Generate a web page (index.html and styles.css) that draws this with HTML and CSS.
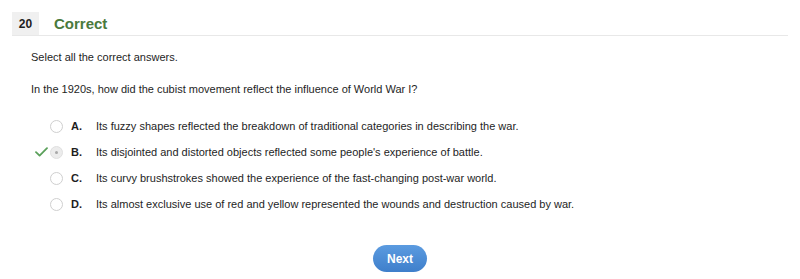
FILE: index.html
```html
<!DOCTYPE html>
<html>
<head>
<meta charset="utf-8">
<link rel="stylesheet" href="styles.css">
</head>
<body>
<div class="page">
  <div class="header">
    <div class="num">20</div>
    <div class="status">Correct</div>
  </div>
  <p class="instr">Select all the correct answers.</p>
  <p class="question">In the 1920s, how did the cubist movement reflect the influence of World War I?</p>
  <ul class="options">
    <li class="opt">
      <span class="mark"></span>
      <span class="radio"></span>
      <span class="letter">A.</span>
      <span class="text">Its fuzzy shapes reflected the breakdown of traditional categories in describing the war.</span>
    </li>
    <li class="opt">
      <span class="mark"><svg width="13" height="10" viewBox="0 0 13 10"><path d="M1 5.2 L4.6 8.6 L12 1.2" fill="none" stroke="#5aa05a" stroke-width="1.8" stroke-linecap="round" stroke-linejoin="round"/></svg></span>
      <span class="radio selected"></span>
      <span class="letter">B.</span>
      <span class="text">Its disjointed and distorted objects reflected some people's experience of battle.</span>
    </li>
    <li class="opt">
      <span class="mark"></span>
      <span class="radio"></span>
      <span class="letter">C.</span>
      <span class="text">Its curvy brushstrokes showed the experience of the fast-changing post-war world.</span>
    </li>
    <li class="opt">
      <span class="mark"></span>
      <span class="radio"></span>
      <span class="letter">D.</span>
      <span class="text">Its almost exclusive use of red and yellow represented the wounds and destruction caused by war.</span>
    </li>
  </ul>
  <div class="actions">
    <button class="next">Next</button>
  </div>
</div>
</body>
</html>
```

FILE: styles.css
```css
html, body {
  margin: 0;
  padding: 0;
  background: #ffffff;
}
body {
  font-family: "Liberation Sans", Arial, sans-serif;
  color: #1e1e1e;
}
.page {
  padding: 12px 12px 0 12px;
}
.header {
  display: flex;
  align-items: center;
  height: 23px;
  border-bottom: 1px solid #e8e8e8;
}
.num {
  width: 27px;
  height: 23px;
  background: #f0f0f0;
  display: flex;
  align-items: center;
  justify-content: center;
  font-weight: bold;
  font-size: 12px;
  color: #1e1e1e;
}
.status {
  margin-left: 15px;
  font-weight: bold;
  font-size: 15px;
  color: #4a7a3c;
}
.instr {
  margin: 13px 0 0 19px;
  font-size: 11px;
  line-height: 16px;
}
.question {
  margin: 16px 0 0 19px;
  font-size: 11px;
  line-height: 16px;
}
.options {
  list-style: none;
  margin: 16px 0 0 0;
  padding: 0;
}
.opt {
  display: flex;
  align-items: center;
  height: 26px;
  font-size: 11px;
}
.mark {
  width: 38px;
  display: flex;
  justify-content: flex-end;
  padding-right: 2px;
  box-sizing: border-box;
}
.radio {
  width: 13px;
  height: 13px;
  border: 1px solid #cfcfcf;
  border-radius: 50%;
  box-sizing: border-box;
  background: #fff;
  position: relative;
}
.radio.selected {
  background: #ececec;
  border-color: #e0e0e0;
}
.radio.selected::after {
  content: "";
  position: absolute;
  left: 4px;
  top: 4px;
  width: 3px;
  height: 3px;
  border-radius: 50%;
  background: #a8a8a8;
}
.letter {
  margin-left: 8px;
  width: 25px;
  font-weight: bold;
}
.text {
  color: #1e1e1e;
}
.actions {
  display: flex;
  justify-content: center;
  margin-top: 28px;
}
.next {
  width: 54px;
  height: 27px;
  border: none;
  border-radius: 14px;
  background: linear-gradient(#5b9be0, #3f7fcb);
  color: #fff;
  font-family: "Liberation Sans", Arial, sans-serif;
  font-weight: bold;
  font-size: 12px;
  padding: 0;
}
```
